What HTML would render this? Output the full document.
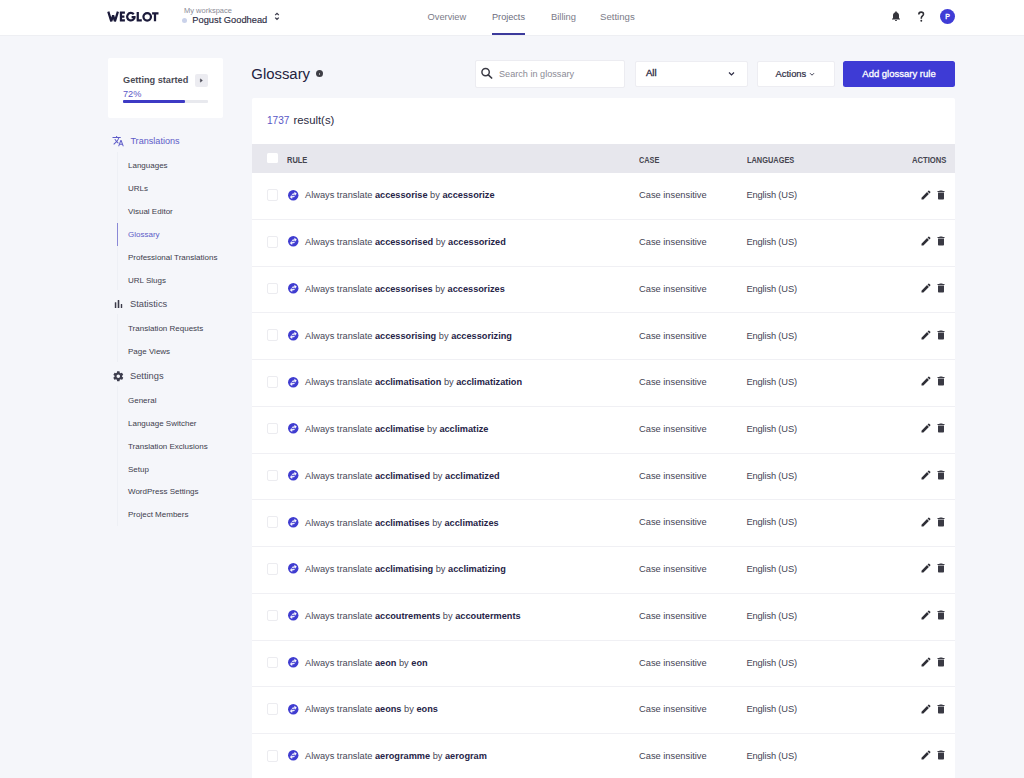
<!DOCTYPE html>
<html><head><meta charset="utf-8"><style>
html,body{margin:0;padding:0;width:1024px;height:778px;overflow:hidden;background:#f5f6fa;font-family:"Liberation Sans",sans-serif;}
#root{position:relative;width:1024px;height:778px;overflow:hidden;}
#hdr{position:absolute;left:0;top:0;width:1024px;height:35px;background:#fff;border-bottom:1px solid #eeeff3;}
.t{position:absolute;white-space:nowrap;line-height:normal;font-family:"Liberation Sans",sans-serif;}
b{font-weight:700;}
</style></head><body><div id="root">
<div id="hdr"></div>
<svg style="position:absolute;left:106px;top:9px" width="54" height="16" viewBox="0 0 54 16"><g fill="none" stroke="#1b1a3a" stroke-width="2.25"><path d="M2.3 2.7 L5.3 12.3 L7.1 6.2 L8.9 12.3 L11.9 2.7" stroke-linejoin="miter" stroke-miterlimit="3"/><path d="M14.95 2.7 V12.3 M13.9 3.7 H18.9 M13.9 7.7 H18.4 M13.9 11.3 H18.9"/><path d="M27.77 5.25 A3.75 3.75 0 1 0 28.64 8.0 M25.6 8.0 H29.6"/><path d="M31.75 3.1 V12.3 M30.7 11.3 H35.8"/><circle cx="41.2" cy="7.85" r="3.75"/><path d="M46.1 4.25 H52.5 M49 3.3 V12.3"/></g></svg>
<div class="t" style="left:184px;top:5.81px;font-size:7.5px;color:#8a8a96;font-weight:400;">My workspace</div>
<div style="position:absolute;left:182.4px;top:17.6px;width:5px;height:5px;border-radius:50%;background:#cad2ea"></div>
<div class="t" style="left:192.3px;top:14.68px;font-size:9.3px;color:#2d2c44;font-weight:400;-webkit-text-stroke:0.15px #2d2c44;">Pogust Goodhead</div>
<svg style="position:absolute;left:274.4px;top:12.3px" width="6" height="9" viewBox="0 0 6 9"><path d="M1.2 3.1 L3 1.4 L4.8 3.1 M1.2 5.6 L3 7.3 L4.8 5.6" stroke="#3a3a4a" stroke-width="1.3" fill="none"/></svg>
<div class="t" style="left:427.5px;top:11.58px;font-size:9.3px;color:#7b7b88;font-weight:400;">Overview</div>
<div class="t" style="left:492px;top:11.72px;font-size:9.15px;color:#6c6c7c;font-weight:400;">Projects</div>
<div class="t" style="left:551px;top:11.49px;font-size:9.4px;color:#7b7b88;font-weight:400;">Billing</div>
<div class="t" style="left:600px;top:11.27px;font-size:9.65px;color:#7b7b88;font-weight:400;">Settings</div>
<div style="position:absolute;left:492px;top:33px;width:33px;height:2px;background:#3c3a9c"></div>
<svg style="position:absolute;left:890px;top:10px" width="12" height="12" viewBox="0 0 24 24"><path fill="#35353c" d="M12 22c1.1 0 2-.9 2-2h-4c0 1.1.9 2 2 2zm6-6v-5c0-3.07-1.64-5.64-4.5-6.32V4c0-.83-.67-1.5-1.5-1.5s-1.5.67-1.5 1.5v.68C7.63 5.36 6 7.92 6 11v5l-2 2v1h16v-1l-2-2z"/></svg>
<svg style="position:absolute;left:916px;top:10.4px" width="10" height="13" viewBox="916 10 10 13"><path d="M918.8 14.4 C918.8 12.9 919.8 12.1 921.1 12.1 C922.5 12.1 923.5 13 923.5 14.2 C923.5 15.8 921.3 16.1 921.3 18 V18.7" stroke="#2f2f36" stroke-width="1.55" fill="none"/><circle cx="921.3" cy="20.7" r="0.95" fill="#2f2f36"/></svg>
<div style="position:absolute;left:940px;top:9px;width:15px;height:15px;border-radius:50%;background:#3f3cd6;color:#fff;font-size:7px;font-weight:400;-webkit-text-stroke:0.35px #fff;text-align:center;line-height:15px;font-family:'Liberation Sans'">P</div>
<div style="position:absolute;left:108px;top:58px;width:115px;height:60px;background:#fff;border-radius:2px"></div>
<div class="t" style="left:123px;top:75.17px;font-size:9.2px;color:#4b4b55;font-weight:700;">Getting started</div>
<div style="position:absolute;left:195px;top:74px;width:13px;height:13px;background:#ececf1;border-radius:2px"></div>
<svg style="position:absolute;left:199px;top:78px" width="5" height="5" viewBox="0 0 5 5"><path d="M1.4 0.9 L3.4 2.5 L1.4 4.1 Z" stroke="#4a4a55" stroke-width="0.6" fill="#4a4a55" stroke-linejoin="round"/></svg>
<div class="t" style="left:123px;top:88.67px;font-size:9.2px;color:#5a58c6;font-weight:400;">72%</div>
<div style="position:absolute;left:123px;top:100.2px;width:85px;height:2.4px;background:#e8e9ee;border-radius:1px"></div>
<div style="position:absolute;left:123px;top:100.2px;width:61.7px;height:2.4px;background:#3d3ac4;border-radius:1px"></div>
<svg style="position:absolute;left:112.3px;top:135.3px" width="12.3" height="12.3" viewBox="0 0 24 24"><path fill="#5e5cc8" d="M12.87 15.07l-2.54-2.51.03-.03c1.74-1.94 2.98-4.17 3.71-6.53H17V4h-7V2H8v2H1v1.99h11.17C11.5 7.92 10.44 9.75 9 11.35 8.07 10.32 7.3 9.19 6.69 8h-2c.73 1.63 1.73 3.17 2.98 4.56l-5.09 5.02L4 19l5-5 3.11 3.11.76-2.04zM18.5 10h-2L12 22h2l1.12-3h4.75L21 22h2l-4.5-12zm-2.62 7l1.62-4.33L19.12 17h-3.24z"/></svg>
<div class="t" style="left:130.4px;top:135.76px;font-size:9.1px;color:#5e5cc8;font-weight:400;">Translations</div>
<div style="position:absolute;left:117px;top:152px;width:1px;height:138px;background:#eef0f5"></div>
<div class="t" style="left:128px;top:160.76px;font-size:8px;color:#3d3d4d;font-weight:400;">Languages</div>
<div class="t" style="left:128px;top:183.76px;font-size:8px;color:#3d3d4d;font-weight:400;">URLs</div>
<div class="t" style="left:128px;top:207.06px;font-size:8px;color:#3d3d4d;font-weight:400;">Visual Editor</div>
<div class="t" style="left:128px;top:229.76px;font-size:8px;color:#5e5cc8;font-weight:400;">Glossary</div>
<div class="t" style="left:128px;top:252.76px;font-size:8px;color:#3d3d4d;font-weight:400;">Professional Translations</div>
<div class="t" style="left:128px;top:275.76px;font-size:8px;color:#3d3d4d;font-weight:400;">URL Slugs</div>
<div style="position:absolute;left:117px;top:223px;width:1px;height:23px;background:#8a88d6"></div>
<svg style="position:absolute;left:110px;top:296px" width="16" height="16" viewBox="110 296 16 16"><rect x="114.8" y="302.2" width="1.5" height="5.8" rx="0.3" fill="#3a3a48"/><rect x="117.7" y="300" width="1.6" height="8" rx="0.3" fill="#3a3a48"/><rect x="120.8" y="304" width="1.4" height="4" rx="0.3" fill="#3a3a48"/></svg>
<div class="t" style="left:130px;top:299.08px;font-size:9.3px;color:#4b4b5a;font-weight:400;">Statistics</div>
<div style="position:absolute;left:117px;top:314px;width:1px;height:48px;background:#eef0f5"></div>
<div class="t" style="left:128px;top:323.76px;font-size:8px;color:#3d3d4d;font-weight:400;">Translation Requests</div>
<div class="t" style="left:128px;top:346.76px;font-size:8px;color:#3d3d4d;font-weight:400;">Page Views</div>
<svg style="position:absolute;left:112.2px;top:369.6px" width="12.6" height="12.6" viewBox="0 0 24 24"><path fill="#3d3d4d" d="M19.14 12.94c.04-.3.06-.61.06-.94 0-.32-.02-.64-.07-.94l2.03-1.58c.18-.14.23-.41.12-.61l-1.92-3.32c-.12-.22-.37-.29-.59-.22l-2.39.96c-.5-.38-1.03-.7-1.62-.94l-.36-2.54c-.04-.24-.24-.41-.48-.41h-3.84c-.24 0-.43.17-.47.41l-.36 2.54c-.59.24-1.13.57-1.62.94l-2.39-.96c-.22-.08-.47 0-.59.22L2.74 8.87c-.12.21-.08.47.12.61l2.030 1.58c-.05.3-.09.63-.09.94s.02.64.07.94l-2.03 1.58c-.18.14-.23.41-.12.61l1.92 3.32c.12.22.37.29.59.22l2.39-.96c.5.38 1.03.7 1.62.94l.36 2.54c.05.24.24.41.48.41h3.84c.24 0 .44-.17.47-.41l.36-2.54c.59-.24 1.13-.56 1.62-.94l2.39.96c.22.08.47 0 .59-.22l1.92-3.32c.12-.22.07-.47-.12-.61l-2.01-1.58zM12 15.3c-1.82 0-3.3-1.48-3.3-3.3s1.48-3.3 3.3-3.3 3.3 1.48 3.3 3.3-1.48 3.3-3.3 3.3z"/></svg>
<div class="t" style="left:130px;top:370.68px;font-size:9.3px;color:#4b4b5a;font-weight:400;">Settings</div>
<div style="position:absolute;left:117px;top:386px;width:1px;height:140px;background:#eef0f5"></div>
<div class="t" style="left:128px;top:395.76px;font-size:8px;color:#3d3d4d;font-weight:400;">General</div>
<div class="t" style="left:128px;top:418.76px;font-size:8px;color:#3d3d4d;font-weight:400;">Language Switcher</div>
<div class="t" style="left:128px;top:441.76px;font-size:8px;color:#3d3d4d;font-weight:400;">Translation Exclusions</div>
<div class="t" style="left:128px;top:464.76px;font-size:8px;color:#3d3d4d;font-weight:400;">Setup</div>
<div class="t" style="left:128px;top:487.26px;font-size:8px;color:#3d3d4d;font-weight:400;">WordPress Settings</div>
<div class="t" style="left:128px;top:510.26px;font-size:8px;color:#3d3d4d;font-weight:400;">Project Members</div>
<div class="t" style="left:251.3px;top:65.92px;font-size:14.9px;color:#23223f;font-weight:400;">Glossary</div>
<div style="position:absolute;left:316.2px;top:70.2px;width:7px;height:7px;border-radius:50%;background:#3f3f46"></div>
<div style="position:absolute;left:319.2px;top:72.8px;width:1px;height:2.6px;background:#aaa"></div>
<div style="position:absolute;left:474.5px;top:60px;width:148.5px;height:25.5px;background:#fff;border:1px solid #ececf1;border-radius:2px"></div>
<svg style="position:absolute;left:480px;top:67px" width="13" height="12" viewBox="0 0 13 12"><circle cx="5.6" cy="5.1" r="3.7" stroke="#3a3a44" stroke-width="1.45" fill="none"/><path d="M8.3 7.9 L11.6 11" stroke="#3a3a44" stroke-width="1.7" stroke-linecap="round"/></svg>
<div class="t" style="left:499px;top:68.72px;font-size:9.15px;color:#8b8b95;font-weight:400;">Search in glossary</div>
<div style="position:absolute;left:635px;top:61px;width:111px;height:24px;background:#fff;border:1px solid #ededf2;border-radius:2px"></div>
<div class="t" style="left:646px;top:67.30px;font-size:9.5px;color:#2d2c44;font-weight:400;-webkit-text-stroke:0.35px #2d2c44;">All</div>
<svg style="position:absolute;left:728px;top:71px" width="7" height="6" viewBox="0 0 7 6"><path d="M1 1.5 L3.5 4 L6 1.5" stroke="#2d2c44" stroke-width="1.2" fill="none"/></svg>
<div style="position:absolute;left:757px;top:61px;width:76px;height:24px;background:#fff;border:1px solid #ededf2;border-radius:2px"></div>
<div class="t" style="left:775.5px;top:68.39px;font-size:9.4px;color:#2d2c44;font-weight:400;-webkit-text-stroke:0.2px #2d2c44;">Actions</div>
<svg style="position:absolute;left:808.5px;top:71.5px" width="6" height="5" viewBox="0 0 6 5"><path d="M1 1.2 L3 3.2 L5 1.2" stroke="#2d2c44" stroke-width="0.9" fill="none"/></svg>
<div style="position:absolute;left:843px;top:61px;width:112px;height:26px;background:#3e3bd5;border-radius:2.5px"></div>
<div class="t" style="left:862.3px;top:68.30px;font-size:9.5px;color:#ffffff;font-weight:400;-webkit-text-stroke:0.3px #fff;">Add glossary rule</div>
<div style="position:absolute;left:252px;top:98px;width:703px;height:700px;background:#fff;border-radius:2px"></div>
<div class="t" style="left:267px;top:115.06px;font-size:10.1px;color:#5a58c6;font-weight:400;">1737</div>
<div class="t" style="left:293.5px;top:113.97px;font-size:11.3px;color:#2b2b3f;font-weight:400;">result(s)</div>
<div style="position:absolute;left:252px;top:144px;width:703px;height:28.5px;background:#e7e7ed"></div>
<div style="position:absolute;left:267px;top:152.5px;width:10.5px;height:10.5px;background:#fff;border-radius:1.5px"></div>
<div class="t" style="left:287px;top:155.31px;font-size:8.5px;color:#45454f;font-weight:700;transform:scaleX(0.88);transform-origin:0 0;">RULE</div>
<div class="t" style="left:639px;top:155.31px;font-size:8.5px;color:#45454f;font-weight:700;transform:scaleX(0.86);transform-origin:0 0;">CASE</div>
<div class="t" style="left:746.5px;top:155.31px;font-size:8.5px;color:#45454f;font-weight:700;transform:scaleX(0.87);transform-origin:0 0;">LANGUAGES</div>
<div class="t" style="left:912px;top:155.31px;font-size:8.5px;color:#45454f;font-weight:700;transform:scaleX(0.9);transform-origin:0 0;">ACTIONS</div>
<div style="position:absolute;left:266.5px;top:189.30px;width:9.5px;height:9.5px;border:1px solid #ececf0;border-radius:2px;background:#fff"></div>
<svg style="position:absolute;left:288px;top:189.60px" width="11" height="11" viewBox="0 0 11 11"><circle cx="5.25" cy="5.2" r="5.2" fill="#3f3cd0"/><g transform="rotate(-14 5.25 5.2) translate(0.7,0.85) scale(0.38)"><path fill="#fff" d="M6.99 11L3 15l3.99 4v-3H14v-2H6.99v-3zM21 9l-3.99-4v3H10v2h7.01v3L21 9z" stroke="#fff" stroke-width="1.2"/></g></svg>
<div class="t" style="left:305px;top:190.43px;font-size:9.25px;color:#474757">Always translate <b style="color:#262447;font-size:9.2px">accessorise</b> by <b style="color:#262447;font-size:9.2px">accessorize</b></div>
<div class="t" style="left:639px;top:190.38px;font-size:9.3px;color:#444454;font-weight:400;">Case insensitive</div>
<div class="t" style="left:746.5px;top:190.38px;font-size:9.3px;color:#444454;font-weight:400;letter-spacing:-0.15px;">English (US)</div>
<svg style="position:absolute;left:919.5px;top:188.50px" width="12" height="12" viewBox="0 0 24 24"><path fill="#2e2e36" d="M3 17.25V21h3.75L17.81 9.94l-3.75-3.75L3 17.25zM20.71 7.04c.39-.39.39-1.02 0-1.41l-2.34-2.34c-.39-.39-1.02-.39-1.41 0l-1.83 1.83 3.75 3.75 1.83-1.83z"/></svg>
<svg style="position:absolute;left:935px;top:188.50px" width="12" height="12" viewBox="0 0 24 24"><path fill="#3a3a44" d="M6 19c0 1.1.9 2 2 2h8c1.1 0 2-.9 2-2V7H6v12zM19 4h-3.5l-1-1h-5l-1 1H5v2h14V4z"/></svg>
<div style="position:absolute;left:252px;top:218.93px;width:703px;height:1px;background:#f0f0f4"></div>
<div style="position:absolute;left:266.5px;top:236.03px;width:9.5px;height:9.5px;border:1px solid #ececf0;border-radius:2px;background:#fff"></div>
<svg style="position:absolute;left:288px;top:236.33px" width="11" height="11" viewBox="0 0 11 11"><circle cx="5.25" cy="5.2" r="5.2" fill="#3f3cd0"/><g transform="rotate(-14 5.25 5.2) translate(0.7,0.85) scale(0.38)"><path fill="#fff" d="M6.99 11L3 15l3.99 4v-3H14v-2H6.99v-3zM21 9l-3.99-4v3H10v2h7.01v3L21 9z" stroke="#fff" stroke-width="1.2"/></g></svg>
<div class="t" style="left:305px;top:237.16px;font-size:9.25px;color:#474757">Always translate <b style="color:#262447;font-size:9.2px">accessorised</b> by <b style="color:#262447;font-size:9.2px">accessorized</b></div>
<div class="t" style="left:639px;top:237.11px;font-size:9.3px;color:#444454;font-weight:400;">Case insensitive</div>
<div class="t" style="left:746.5px;top:237.11px;font-size:9.3px;color:#444454;font-weight:400;letter-spacing:-0.15px;">English (US)</div>
<svg style="position:absolute;left:919.5px;top:235.23px" width="12" height="12" viewBox="0 0 24 24"><path fill="#2e2e36" d="M3 17.25V21h3.75L17.81 9.94l-3.75-3.75L3 17.25zM20.71 7.04c.39-.39.39-1.02 0-1.41l-2.34-2.34c-.39-.39-1.02-.39-1.41 0l-1.83 1.83 3.75 3.75 1.83-1.83z"/></svg>
<svg style="position:absolute;left:935px;top:235.23px" width="12" height="12" viewBox="0 0 24 24"><path fill="#3a3a44" d="M6 19c0 1.1.9 2 2 2h8c1.1 0 2-.9 2-2V7H6v12zM19 4h-3.5l-1-1h-5l-1 1H5v2h14V4z"/></svg>
<div style="position:absolute;left:252px;top:265.66px;width:703px;height:1px;background:#f0f0f4"></div>
<div style="position:absolute;left:266.5px;top:282.76px;width:9.5px;height:9.5px;border:1px solid #ececf0;border-radius:2px;background:#fff"></div>
<svg style="position:absolute;left:288px;top:283.06px" width="11" height="11" viewBox="0 0 11 11"><circle cx="5.25" cy="5.2" r="5.2" fill="#3f3cd0"/><g transform="rotate(-14 5.25 5.2) translate(0.7,0.85) scale(0.38)"><path fill="#fff" d="M6.99 11L3 15l3.99 4v-3H14v-2H6.99v-3zM21 9l-3.99-4v3H10v2h7.01v3L21 9z" stroke="#fff" stroke-width="1.2"/></g></svg>
<div class="t" style="left:305px;top:283.89px;font-size:9.25px;color:#474757">Always translate <b style="color:#262447;font-size:9.2px">accessorises</b> by <b style="color:#262447;font-size:9.2px">accessorizes</b></div>
<div class="t" style="left:639px;top:283.84px;font-size:9.3px;color:#444454;font-weight:400;">Case insensitive</div>
<div class="t" style="left:746.5px;top:283.84px;font-size:9.3px;color:#444454;font-weight:400;letter-spacing:-0.15px;">English (US)</div>
<svg style="position:absolute;left:919.5px;top:281.96px" width="12" height="12" viewBox="0 0 24 24"><path fill="#2e2e36" d="M3 17.25V21h3.75L17.81 9.94l-3.75-3.75L3 17.25zM20.71 7.04c.39-.39.39-1.02 0-1.41l-2.34-2.34c-.39-.39-1.02-.39-1.41 0l-1.83 1.83 3.75 3.75 1.83-1.83z"/></svg>
<svg style="position:absolute;left:935px;top:281.96px" width="12" height="12" viewBox="0 0 24 24"><path fill="#3a3a44" d="M6 19c0 1.1.9 2 2 2h8c1.1 0 2-.9 2-2V7H6v12zM19 4h-3.5l-1-1h-5l-1 1H5v2h14V4z"/></svg>
<div style="position:absolute;left:252px;top:312.39px;width:703px;height:1px;background:#f0f0f4"></div>
<div style="position:absolute;left:266.5px;top:329.49px;width:9.5px;height:9.5px;border:1px solid #ececf0;border-radius:2px;background:#fff"></div>
<svg style="position:absolute;left:288px;top:329.79px" width="11" height="11" viewBox="0 0 11 11"><circle cx="5.25" cy="5.2" r="5.2" fill="#3f3cd0"/><g transform="rotate(-14 5.25 5.2) translate(0.7,0.85) scale(0.38)"><path fill="#fff" d="M6.99 11L3 15l3.99 4v-3H14v-2H6.99v-3zM21 9l-3.99-4v3H10v2h7.01v3L21 9z" stroke="#fff" stroke-width="1.2"/></g></svg>
<div class="t" style="left:305px;top:330.62px;font-size:9.25px;color:#474757">Always translate <b style="color:#262447;font-size:9.2px">accessorising</b> by <b style="color:#262447;font-size:9.2px">accessorizing</b></div>
<div class="t" style="left:639px;top:330.57px;font-size:9.3px;color:#444454;font-weight:400;">Case insensitive</div>
<div class="t" style="left:746.5px;top:330.57px;font-size:9.3px;color:#444454;font-weight:400;letter-spacing:-0.15px;">English (US)</div>
<svg style="position:absolute;left:919.5px;top:328.69px" width="12" height="12" viewBox="0 0 24 24"><path fill="#2e2e36" d="M3 17.25V21h3.75L17.81 9.94l-3.75-3.75L3 17.25zM20.71 7.04c.39-.39.39-1.02 0-1.41l-2.34-2.34c-.39-.39-1.02-.39-1.41 0l-1.83 1.83 3.75 3.75 1.83-1.83z"/></svg>
<svg style="position:absolute;left:935px;top:328.69px" width="12" height="12" viewBox="0 0 24 24"><path fill="#3a3a44" d="M6 19c0 1.1.9 2 2 2h8c1.1 0 2-.9 2-2V7H6v12zM19 4h-3.5l-1-1h-5l-1 1H5v2h14V4z"/></svg>
<div style="position:absolute;left:252px;top:359.12px;width:703px;height:1px;background:#f0f0f4"></div>
<div style="position:absolute;left:266.5px;top:376.22px;width:9.5px;height:9.5px;border:1px solid #ececf0;border-radius:2px;background:#fff"></div>
<svg style="position:absolute;left:288px;top:376.52px" width="11" height="11" viewBox="0 0 11 11"><circle cx="5.25" cy="5.2" r="5.2" fill="#3f3cd0"/><g transform="rotate(-14 5.25 5.2) translate(0.7,0.85) scale(0.38)"><path fill="#fff" d="M6.99 11L3 15l3.99 4v-3H14v-2H6.99v-3zM21 9l-3.99-4v3H10v2h7.01v3L21 9z" stroke="#fff" stroke-width="1.2"/></g></svg>
<div class="t" style="left:305px;top:377.35px;font-size:9.25px;color:#474757">Always translate <b style="color:#262447;font-size:9.2px">acclimatisation</b> by <b style="color:#262447;font-size:9.2px">acclimatization</b></div>
<div class="t" style="left:639px;top:377.30px;font-size:9.3px;color:#444454;font-weight:400;">Case insensitive</div>
<div class="t" style="left:746.5px;top:377.30px;font-size:9.3px;color:#444454;font-weight:400;letter-spacing:-0.15px;">English (US)</div>
<svg style="position:absolute;left:919.5px;top:375.42px" width="12" height="12" viewBox="0 0 24 24"><path fill="#2e2e36" d="M3 17.25V21h3.75L17.81 9.94l-3.75-3.75L3 17.25zM20.71 7.04c.39-.39.39-1.02 0-1.41l-2.34-2.34c-.39-.39-1.02-.39-1.41 0l-1.83 1.83 3.75 3.75 1.83-1.83z"/></svg>
<svg style="position:absolute;left:935px;top:375.42px" width="12" height="12" viewBox="0 0 24 24"><path fill="#3a3a44" d="M6 19c0 1.1.9 2 2 2h8c1.1 0 2-.9 2-2V7H6v12zM19 4h-3.5l-1-1h-5l-1 1H5v2h14V4z"/></svg>
<div style="position:absolute;left:252px;top:405.85px;width:703px;height:1px;background:#f0f0f4"></div>
<div style="position:absolute;left:266.5px;top:422.95px;width:9.5px;height:9.5px;border:1px solid #ececf0;border-radius:2px;background:#fff"></div>
<svg style="position:absolute;left:288px;top:423.25px" width="11" height="11" viewBox="0 0 11 11"><circle cx="5.25" cy="5.2" r="5.2" fill="#3f3cd0"/><g transform="rotate(-14 5.25 5.2) translate(0.7,0.85) scale(0.38)"><path fill="#fff" d="M6.99 11L3 15l3.99 4v-3H14v-2H6.99v-3zM21 9l-3.99-4v3H10v2h7.01v3L21 9z" stroke="#fff" stroke-width="1.2"/></g></svg>
<div class="t" style="left:305px;top:424.08px;font-size:9.25px;color:#474757">Always translate <b style="color:#262447;font-size:9.2px">acclimatise</b> by <b style="color:#262447;font-size:9.2px">acclimatize</b></div>
<div class="t" style="left:639px;top:424.03px;font-size:9.3px;color:#444454;font-weight:400;">Case insensitive</div>
<div class="t" style="left:746.5px;top:424.03px;font-size:9.3px;color:#444454;font-weight:400;letter-spacing:-0.15px;">English (US)</div>
<svg style="position:absolute;left:919.5px;top:422.15px" width="12" height="12" viewBox="0 0 24 24"><path fill="#2e2e36" d="M3 17.25V21h3.75L17.81 9.94l-3.75-3.75L3 17.25zM20.71 7.04c.39-.39.39-1.02 0-1.41l-2.34-2.34c-.39-.39-1.02-.39-1.41 0l-1.83 1.83 3.75 3.75 1.83-1.83z"/></svg>
<svg style="position:absolute;left:935px;top:422.15px" width="12" height="12" viewBox="0 0 24 24"><path fill="#3a3a44" d="M6 19c0 1.1.9 2 2 2h8c1.1 0 2-.9 2-2V7H6v12zM19 4h-3.5l-1-1h-5l-1 1H5v2h14V4z"/></svg>
<div style="position:absolute;left:252px;top:452.58px;width:703px;height:1px;background:#f0f0f4"></div>
<div style="position:absolute;left:266.5px;top:469.68px;width:9.5px;height:9.5px;border:1px solid #ececf0;border-radius:2px;background:#fff"></div>
<svg style="position:absolute;left:288px;top:469.98px" width="11" height="11" viewBox="0 0 11 11"><circle cx="5.25" cy="5.2" r="5.2" fill="#3f3cd0"/><g transform="rotate(-14 5.25 5.2) translate(0.7,0.85) scale(0.38)"><path fill="#fff" d="M6.99 11L3 15l3.99 4v-3H14v-2H6.99v-3zM21 9l-3.99-4v3H10v2h7.01v3L21 9z" stroke="#fff" stroke-width="1.2"/></g></svg>
<div class="t" style="left:305px;top:470.81px;font-size:9.25px;color:#474757">Always translate <b style="color:#262447;font-size:9.2px">acclimatised</b> by <b style="color:#262447;font-size:9.2px">acclimatized</b></div>
<div class="t" style="left:639px;top:470.76px;font-size:9.3px;color:#444454;font-weight:400;">Case insensitive</div>
<div class="t" style="left:746.5px;top:470.76px;font-size:9.3px;color:#444454;font-weight:400;letter-spacing:-0.15px;">English (US)</div>
<svg style="position:absolute;left:919.5px;top:468.88px" width="12" height="12" viewBox="0 0 24 24"><path fill="#2e2e36" d="M3 17.25V21h3.75L17.81 9.94l-3.75-3.75L3 17.25zM20.71 7.04c.39-.39.39-1.02 0-1.41l-2.34-2.34c-.39-.39-1.02-.39-1.41 0l-1.83 1.83 3.75 3.75 1.83-1.83z"/></svg>
<svg style="position:absolute;left:935px;top:468.88px" width="12" height="12" viewBox="0 0 24 24"><path fill="#3a3a44" d="M6 19c0 1.1.9 2 2 2h8c1.1 0 2-.9 2-2V7H6v12zM19 4h-3.5l-1-1h-5l-1 1H5v2h14V4z"/></svg>
<div style="position:absolute;left:252px;top:499.31px;width:703px;height:1px;background:#f0f0f4"></div>
<div style="position:absolute;left:266.5px;top:516.41px;width:9.5px;height:9.5px;border:1px solid #ececf0;border-radius:2px;background:#fff"></div>
<svg style="position:absolute;left:288px;top:516.71px" width="11" height="11" viewBox="0 0 11 11"><circle cx="5.25" cy="5.2" r="5.2" fill="#3f3cd0"/><g transform="rotate(-14 5.25 5.2) translate(0.7,0.85) scale(0.38)"><path fill="#fff" d="M6.99 11L3 15l3.99 4v-3H14v-2H6.99v-3zM21 9l-3.99-4v3H10v2h7.01v3L21 9z" stroke="#fff" stroke-width="1.2"/></g></svg>
<div class="t" style="left:305px;top:517.54px;font-size:9.25px;color:#474757">Always translate <b style="color:#262447;font-size:9.2px">acclimatises</b> by <b style="color:#262447;font-size:9.2px">acclimatizes</b></div>
<div class="t" style="left:639px;top:517.49px;font-size:9.3px;color:#444454;font-weight:400;">Case insensitive</div>
<div class="t" style="left:746.5px;top:517.49px;font-size:9.3px;color:#444454;font-weight:400;letter-spacing:-0.15px;">English (US)</div>
<svg style="position:absolute;left:919.5px;top:515.61px" width="12" height="12" viewBox="0 0 24 24"><path fill="#2e2e36" d="M3 17.25V21h3.75L17.81 9.94l-3.75-3.75L3 17.25zM20.71 7.04c.39-.39.39-1.02 0-1.41l-2.34-2.34c-.39-.39-1.02-.39-1.41 0l-1.83 1.83 3.75 3.75 1.83-1.83z"/></svg>
<svg style="position:absolute;left:935px;top:515.61px" width="12" height="12" viewBox="0 0 24 24"><path fill="#3a3a44" d="M6 19c0 1.1.9 2 2 2h8c1.1 0 2-.9 2-2V7H6v12zM19 4h-3.5l-1-1h-5l-1 1H5v2h14V4z"/></svg>
<div style="position:absolute;left:252px;top:546.04px;width:703px;height:1px;background:#f0f0f4"></div>
<div style="position:absolute;left:266.5px;top:563.14px;width:9.5px;height:9.5px;border:1px solid #ececf0;border-radius:2px;background:#fff"></div>
<svg style="position:absolute;left:288px;top:563.44px" width="11" height="11" viewBox="0 0 11 11"><circle cx="5.25" cy="5.2" r="5.2" fill="#3f3cd0"/><g transform="rotate(-14 5.25 5.2) translate(0.7,0.85) scale(0.38)"><path fill="#fff" d="M6.99 11L3 15l3.99 4v-3H14v-2H6.99v-3zM21 9l-3.99-4v3H10v2h7.01v3L21 9z" stroke="#fff" stroke-width="1.2"/></g></svg>
<div class="t" style="left:305px;top:564.27px;font-size:9.25px;color:#474757">Always translate <b style="color:#262447;font-size:9.2px">acclimatising</b> by <b style="color:#262447;font-size:9.2px">acclimatizing</b></div>
<div class="t" style="left:639px;top:564.22px;font-size:9.3px;color:#444454;font-weight:400;">Case insensitive</div>
<div class="t" style="left:746.5px;top:564.22px;font-size:9.3px;color:#444454;font-weight:400;letter-spacing:-0.15px;">English (US)</div>
<svg style="position:absolute;left:919.5px;top:562.34px" width="12" height="12" viewBox="0 0 24 24"><path fill="#2e2e36" d="M3 17.25V21h3.75L17.81 9.94l-3.75-3.75L3 17.25zM20.71 7.04c.39-.39.39-1.02 0-1.41l-2.34-2.34c-.39-.39-1.02-.39-1.41 0l-1.83 1.83 3.75 3.75 1.83-1.83z"/></svg>
<svg style="position:absolute;left:935px;top:562.34px" width="12" height="12" viewBox="0 0 24 24"><path fill="#3a3a44" d="M6 19c0 1.1.9 2 2 2h8c1.1 0 2-.9 2-2V7H6v12zM19 4h-3.5l-1-1h-5l-1 1H5v2h14V4z"/></svg>
<div style="position:absolute;left:252px;top:592.77px;width:703px;height:1px;background:#f0f0f4"></div>
<div style="position:absolute;left:266.5px;top:609.87px;width:9.5px;height:9.5px;border:1px solid #ececf0;border-radius:2px;background:#fff"></div>
<svg style="position:absolute;left:288px;top:610.17px" width="11" height="11" viewBox="0 0 11 11"><circle cx="5.25" cy="5.2" r="5.2" fill="#3f3cd0"/><g transform="rotate(-14 5.25 5.2) translate(0.7,0.85) scale(0.38)"><path fill="#fff" d="M6.99 11L3 15l3.99 4v-3H14v-2H6.99v-3zM21 9l-3.99-4v3H10v2h7.01v3L21 9z" stroke="#fff" stroke-width="1.2"/></g></svg>
<div class="t" style="left:305px;top:611.00px;font-size:9.25px;color:#474757">Always translate <b style="color:#262447;font-size:9.2px">accoutrements</b> by <b style="color:#262447;font-size:9.2px">accouterments</b></div>
<div class="t" style="left:639px;top:610.95px;font-size:9.3px;color:#444454;font-weight:400;">Case insensitive</div>
<div class="t" style="left:746.5px;top:610.95px;font-size:9.3px;color:#444454;font-weight:400;letter-spacing:-0.15px;">English (US)</div>
<svg style="position:absolute;left:919.5px;top:609.07px" width="12" height="12" viewBox="0 0 24 24"><path fill="#2e2e36" d="M3 17.25V21h3.75L17.81 9.94l-3.75-3.75L3 17.25zM20.71 7.04c.39-.39.39-1.02 0-1.41l-2.34-2.34c-.39-.39-1.02-.39-1.41 0l-1.83 1.83 3.75 3.75 1.83-1.83z"/></svg>
<svg style="position:absolute;left:935px;top:609.07px" width="12" height="12" viewBox="0 0 24 24"><path fill="#3a3a44" d="M6 19c0 1.1.9 2 2 2h8c1.1 0 2-.9 2-2V7H6v12zM19 4h-3.5l-1-1h-5l-1 1H5v2h14V4z"/></svg>
<div style="position:absolute;left:252px;top:639.50px;width:703px;height:1px;background:#f0f0f4"></div>
<div style="position:absolute;left:266.5px;top:656.60px;width:9.5px;height:9.5px;border:1px solid #ececf0;border-radius:2px;background:#fff"></div>
<svg style="position:absolute;left:288px;top:656.90px" width="11" height="11" viewBox="0 0 11 11"><circle cx="5.25" cy="5.2" r="5.2" fill="#3f3cd0"/><g transform="rotate(-14 5.25 5.2) translate(0.7,0.85) scale(0.38)"><path fill="#fff" d="M6.99 11L3 15l3.99 4v-3H14v-2H6.99v-3zM21 9l-3.99-4v3H10v2h7.01v3L21 9z" stroke="#fff" stroke-width="1.2"/></g></svg>
<div class="t" style="left:305px;top:657.73px;font-size:9.25px;color:#474757">Always translate <b style="color:#262447;font-size:9.2px">aeon</b> by <b style="color:#262447;font-size:9.2px">eon</b></div>
<div class="t" style="left:639px;top:657.68px;font-size:9.3px;color:#444454;font-weight:400;">Case insensitive</div>
<div class="t" style="left:746.5px;top:657.68px;font-size:9.3px;color:#444454;font-weight:400;letter-spacing:-0.15px;">English (US)</div>
<svg style="position:absolute;left:919.5px;top:655.80px" width="12" height="12" viewBox="0 0 24 24"><path fill="#2e2e36" d="M3 17.25V21h3.75L17.81 9.94l-3.75-3.75L3 17.25zM20.71 7.04c.39-.39.39-1.02 0-1.41l-2.34-2.34c-.39-.39-1.02-.39-1.41 0l-1.83 1.83 3.75 3.75 1.83-1.83z"/></svg>
<svg style="position:absolute;left:935px;top:655.80px" width="12" height="12" viewBox="0 0 24 24"><path fill="#3a3a44" d="M6 19c0 1.1.9 2 2 2h8c1.1 0 2-.9 2-2V7H6v12zM19 4h-3.5l-1-1h-5l-1 1H5v2h14V4z"/></svg>
<div style="position:absolute;left:252px;top:686.23px;width:703px;height:1px;background:#f0f0f4"></div>
<div style="position:absolute;left:266.5px;top:703.33px;width:9.5px;height:9.5px;border:1px solid #ececf0;border-radius:2px;background:#fff"></div>
<svg style="position:absolute;left:288px;top:703.63px" width="11" height="11" viewBox="0 0 11 11"><circle cx="5.25" cy="5.2" r="5.2" fill="#3f3cd0"/><g transform="rotate(-14 5.25 5.2) translate(0.7,0.85) scale(0.38)"><path fill="#fff" d="M6.99 11L3 15l3.99 4v-3H14v-2H6.99v-3zM21 9l-3.99-4v3H10v2h7.01v3L21 9z" stroke="#fff" stroke-width="1.2"/></g></svg>
<div class="t" style="left:305px;top:704.46px;font-size:9.25px;color:#474757">Always translate <b style="color:#262447;font-size:9.2px">aeons</b> by <b style="color:#262447;font-size:9.2px">eons</b></div>
<div class="t" style="left:639px;top:704.41px;font-size:9.3px;color:#444454;font-weight:400;">Case insensitive</div>
<div class="t" style="left:746.5px;top:704.41px;font-size:9.3px;color:#444454;font-weight:400;letter-spacing:-0.15px;">English (US)</div>
<svg style="position:absolute;left:919.5px;top:702.53px" width="12" height="12" viewBox="0 0 24 24"><path fill="#2e2e36" d="M3 17.25V21h3.75L17.81 9.94l-3.75-3.75L3 17.25zM20.71 7.04c.39-.39.39-1.02 0-1.41l-2.34-2.34c-.39-.39-1.02-.39-1.41 0l-1.83 1.83 3.75 3.75 1.83-1.83z"/></svg>
<svg style="position:absolute;left:935px;top:702.53px" width="12" height="12" viewBox="0 0 24 24"><path fill="#3a3a44" d="M6 19c0 1.1.9 2 2 2h8c1.1 0 2-.9 2-2V7H6v12zM19 4h-3.5l-1-1h-5l-1 1H5v2h14V4z"/></svg>
<div style="position:absolute;left:252px;top:732.96px;width:703px;height:1px;background:#f0f0f4"></div>
<div style="position:absolute;left:266.5px;top:750.06px;width:9.5px;height:9.5px;border:1px solid #ececf0;border-radius:2px;background:#fff"></div>
<svg style="position:absolute;left:288px;top:750.36px" width="11" height="11" viewBox="0 0 11 11"><circle cx="5.25" cy="5.2" r="5.2" fill="#3f3cd0"/><g transform="rotate(-14 5.25 5.2) translate(0.7,0.85) scale(0.38)"><path fill="#fff" d="M6.99 11L3 15l3.99 4v-3H14v-2H6.99v-3zM21 9l-3.99-4v3H10v2h7.01v3L21 9z" stroke="#fff" stroke-width="1.2"/></g></svg>
<div class="t" style="left:305px;top:751.19px;font-size:9.25px;color:#474757">Always translate <b style="color:#262447;font-size:9.2px">aerogramme</b> by <b style="color:#262447;font-size:9.2px">aerogram</b></div>
<div class="t" style="left:639px;top:751.14px;font-size:9.3px;color:#444454;font-weight:400;">Case insensitive</div>
<div class="t" style="left:746.5px;top:751.14px;font-size:9.3px;color:#444454;font-weight:400;letter-spacing:-0.15px;">English (US)</div>
<svg style="position:absolute;left:919.5px;top:749.26px" width="12" height="12" viewBox="0 0 24 24"><path fill="#2e2e36" d="M3 17.25V21h3.75L17.81 9.94l-3.75-3.75L3 17.25zM20.71 7.04c.39-.39.39-1.02 0-1.41l-2.34-2.34c-.39-.39-1.02-.39-1.41 0l-1.83 1.83 3.75 3.75 1.83-1.83z"/></svg>
<svg style="position:absolute;left:935px;top:749.26px" width="12" height="12" viewBox="0 0 24 24"><path fill="#3a3a44" d="M6 19c0 1.1.9 2 2 2h8c1.1 0 2-.9 2-2V7H6v12zM19 4h-3.5l-1-1h-5l-1 1H5v2h14V4z"/></svg>
</div></body></html>
